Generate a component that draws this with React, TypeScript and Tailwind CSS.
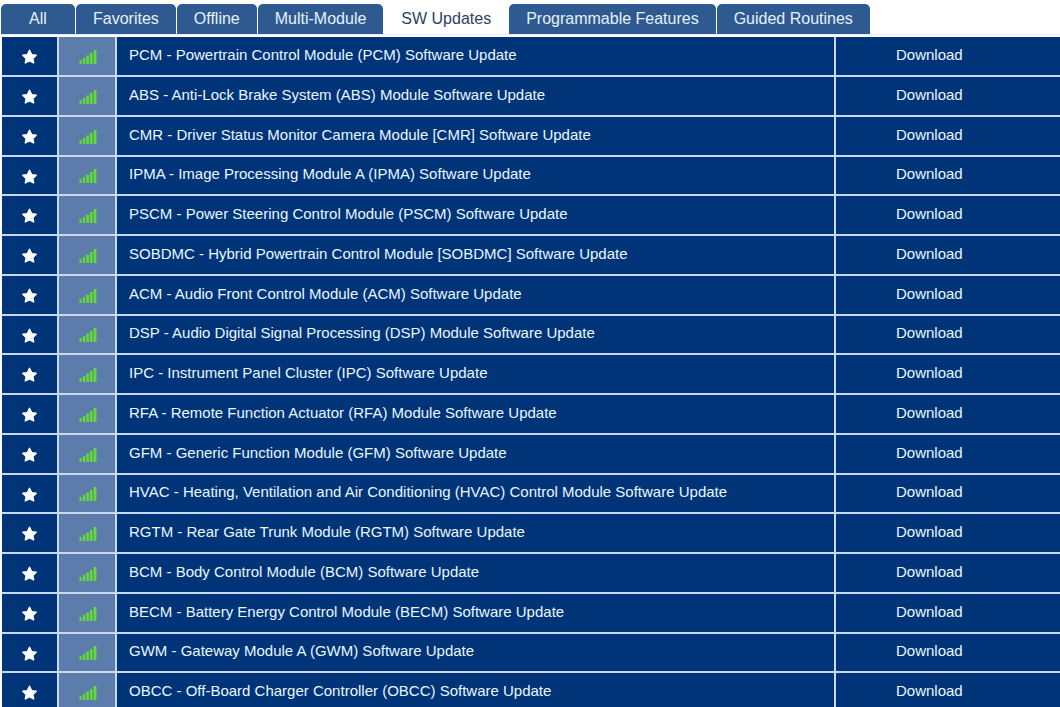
import React, { useState } from 'react';

const tabs = [
  'All',
  'Favorites',
  'Offline',
  'Multi-Module',
  'SW Updates',
  'Programmable Features',
  'Guided Routines',
];

const updates = [
  'PCM - Powertrain Control Module (PCM) Software Update',
  'ABS - Anti-Lock Brake System (ABS) Module Software Update',
  'CMR - Driver Status Monitor Camera Module [CMR] Software Update',
  'IPMA - Image Processing Module A (IPMA) Software Update',
  'PSCM - Power Steering Control Module (PSCM) Software Update',
  'SOBDMC - Hybrid Powertrain Control Module [SOBDMC] Software Update',
  'ACM - Audio Front Control Module (ACM) Software Update',
  'DSP - Audio Digital Signal Processing (DSP) Module Software Update',
  'IPC - Instrument Panel Cluster (IPC) Software Update',
  'RFA - Remote Function Actuator (RFA) Module Software Update',
  'GFM - Generic Function Module (GFM) Software Update',
  'HVAC - Heating, Ventilation and Air Conditioning (HVAC) Control Module Software Update',
  'RGTM - Rear Gate Trunk Module (RGTM) Software Update',
  'BCM - Body Control Module (BCM) Software Update',
  'BECM - Battery Energy Control Module (BECM) Software Update',
  'GWM - Gateway Module A (GWM) Software Update',
  'OBCC - Off-Board Charger Controller (OBCC) Software Update',
];

const StarIcon = () => (
  <svg width="17" height="16" viewBox="0 0 17 16" fill="white" stroke="white" strokeWidth="1.4" strokeLinejoin="round">
    <path d="M8.5 1.2 L10.6 5.6 L15.2 6.2 L11.8 9.4 L12.7 14 L8.5 11.8 L4.3 14 L5.2 9.4 L1.8 6.2 L6.4 5.6 Z" />
  </svg>
);

const SignalIcon = () => (
  <svg width="18" height="15" viewBox="0 0 18 15" fill="#62dc35">
    <rect x="0.5" y="11" width="2" height="4" />
    <rect x="3.8" y="9" width="2.4" height="6" />
    <rect x="7.3" y="6.5" width="2.6" height="8.5" />
    <rect x="10.9" y="4" width="2.6" height="11" />
    <rect x="14.6" y="1" width="2.8" height="14" />
  </svg>
);

const App: React.FC = () => {
  const [activeTab, setActiveTab] = useState('SW Updates');
  const [favorites, setFavorites] = useState<string[]>(updates);

  const toggleFavorite = (name: string) => {
    setFavorites(prev => (prev.includes(name) ? prev.filter(f => f !== name) : [...prev, name]));
  };

  return (
    <div className="h-screen overflow-hidden bg-white font-['Liberation_Sans',Arial,sans-serif]">
      {/* Tabs */}
      <nav className="flex gap-px border-b border-[#e6e9ee] pt-1 pl-px">
        {tabs.map(tab => (
          <button
            key={tab}
            onClick={() => setActiveTab(tab)}
            className={`h-[30px] min-w-[74px] rounded-t-[5px] px-[17px] text-base whitespace-nowrap ${
              activeTab === tab ? 'bg-white text-[#2b3f63]' : 'bg-[#2f5a91] text-[#e4f2fc]'
            }`}
          >
            {tab}
          </button>
        ))}
      </nav>

      {/* Module list */}
      <div className="pt-0.5 pl-0.5">
        <table className="w-full table-fixed border-separate border-spacing-0 text-[15px] text-[#e9f7ff]">
          <colgroup>
            <col className="w-[57px]" />
            <col className="w-[58px]" />
            <col />
            <col className="w-56" />
          </colgroup>
          <tbody>
            {updates.map(name => (
              <tr key={name} className="h-10 bg-[#003478] nth-[4n]:h-[39px]">
                <td className="border-r-2 border-b-2 border-[#c9d9f0] p-0">
                  <button
                    aria-label={`Favorite ${name}`}
                    aria-pressed={favorites.includes(name)}
                    onClick={() => toggleFavorite(name)}
                    className={`mx-auto block pt-0.5 ${favorites.includes(name) ? '' : 'opacity-40'}`}
                  >
                    <StarIcon />
                  </button>
                </td>
                <td className="border-r-2 border-b-2 border-[#c9d9f0] bg-[#5c7cab] p-0">
                  <div className="flex justify-center pl-0.5">
                    <SignalIcon />
                  </div>
                </td>
                <td className="truncate border-r-2 border-b-2 border-[#c9d9f0] p-0 pb-0.5 pl-3">{name}</td>
                <td className="border-b-2 border-[#c9d9f0] p-0 pb-0.5 pl-[60px]">
                  <button className="block">Download</button>
                </td>
              </tr>
            ))}
          </tbody>
        </table>
      </div>
    </div>
  );
};

export default App;
